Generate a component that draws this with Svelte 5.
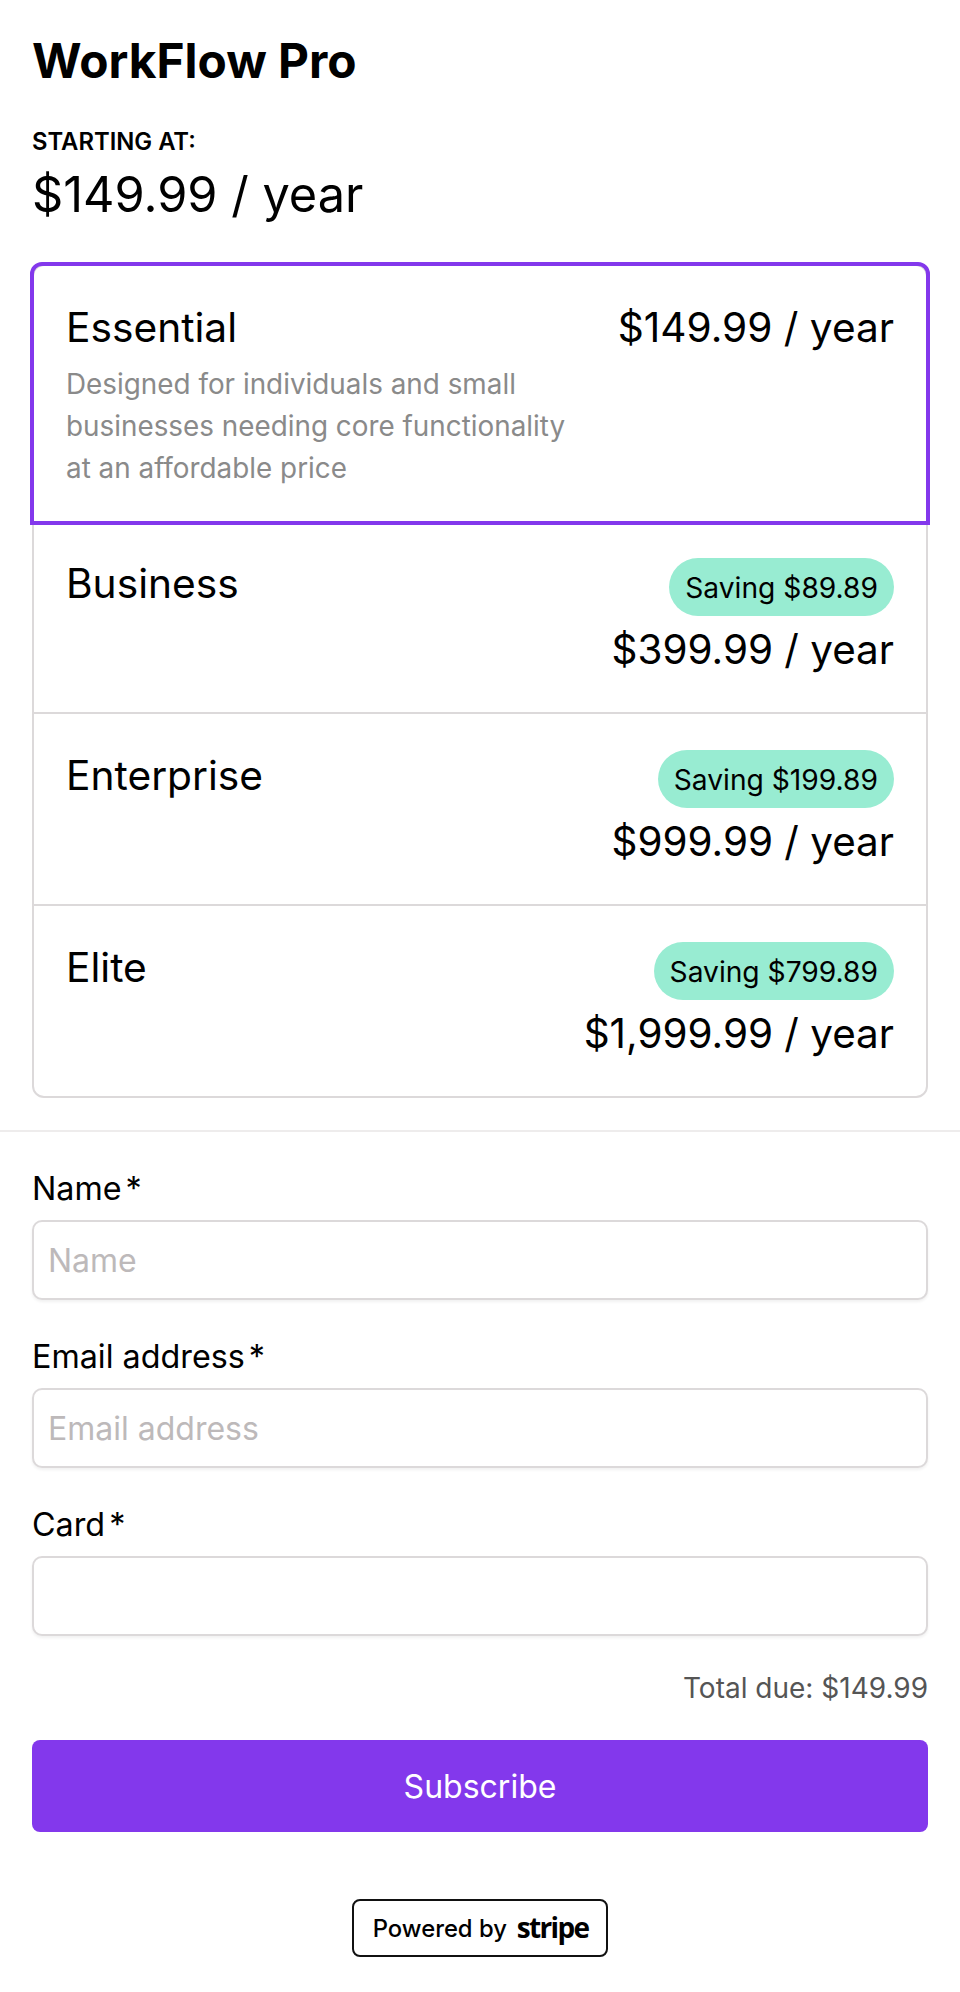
<script>
  const plans = [
    { name: 'Business', saving: 'Saving $89.89', price: '$399.99 / year' },
    { name: 'Enterprise', saving: 'Saving $199.89', price: '$999.99 / year' },
    { name: 'Elite', saving: 'Saving $799.89', price: '$1,999.99 / year' }
  ];
  const fields = [
    { label: 'Name', placeholder: 'Name' },
    { label: 'Email address', placeholder: 'Email address' },
    { label: 'Card', placeholder: '' }
  ];
</script>

<main class="page">
  <header class="head">
    <h1>WorkFlow Pro</h1>
    <p class="starting">STARTING AT:</p>
    <p class="headprice">$149.99 / year</p>
  </header>

  <section class="plans">
    <div class="plan selected">
      <div class="info">
        <div class="name">Essential</div>
        <p class="desc">Designed for individuals and small businesses needing core functionality at an affordable price</p>
      </div>
      <div class="price">$149.99 / year</div>
    </div>
    {#each plans as plan}
      <div class="plan">
        <div class="name">{plan.name}</div>
        <div class="right">
          <span class="chip">{plan.saving}</span>
          <div class="price">{plan.price}</div>
        </div>
      </div>
    {/each}
  </section>

  <hr class="divider" />

  <form class="form">
    {#each fields as f}
      <div class="field">
        <div class="label">{f.label}<span class="req">*</span></div>
        <input type="text" placeholder={f.placeholder} />
      </div>
    {/each}
    <div class="total">Total due: $149.99</div>
    <button type="button" class="subscribe">Subscribe</button>
    <div class="foot">
      <div class="badge"><span class="pow">Powered by</span><span class="stripe">stripe</span></div>
    </div>
  </form>
</main>

<style>
  :global(body) { margin: 0; background: #fff; }
  * { box-sizing: border-box; }
  .page { width: 960px; height: 1992px; font-family: Inter, sans-serif; color: #000; overflow: hidden; }
  .head { padding: 33px 32px 0; }
  h1 { margin: 0; font-size: 47.8px; line-height: 56px; font-weight: 700; }
  .starting { margin: 39px 0 0; font-size: 23.8px; line-height: 28px; font-weight: 600; }
  .headprice { margin: 11px 0 0; font-size: 48.7px; line-height: 56px; }
  .plans { margin: 41px 32px 0; border: 2px solid #dcd9da; border-radius: 12px; }
  .plan { display: flex; justify-content: space-between; align-items: flex-start; padding: 36px 32px 0; height: 192px; border-top: 2px solid #dcd9da; }
  .plan.selected { height: 263px; margin: -4px -4px 0; border: 4px solid #8338ec; border-radius: 12px 12px 0 0; padding: 37px 32px 0; }
  .plan.selected + .plan { height: 187px; border-top: 0; padding-top: 33px; }
  .name { font-size: 40.7px; line-height: 51px; }
  .selected .name { line-height: 50px; }
  .info { width: 520px; }
  .desc { margin: 10px 0 0; font-size: 27.85px; line-height: 42px; color: #8a8a8a; }
  .selected .price { line-height: 50px; font-size: 40.6px; }
  .right { display: flex; flex-direction: column; align-items: flex-end; gap: 10px; }
  .price { font-size: 40.4px; line-height: 48px; }
  .chip { display: block; padding: 9px 16px 7px; font-size: 28.2px; line-height: 42px; background: #98ecd2; border-radius: 29px; }
  .divider { margin: 32px 0 0; border: 0; border-top: 2px solid #eeecec; }
  .form { padding: 36px 32px 0; }
  .field { margin-bottom: 36px; }
  .label { font-size: 32.3px; line-height: 42px; margin-bottom: 10px; }
  .req { margin-left: 4px; }
  input { display: block; width: 100%; height: 80px; padding: 0 14px; font: inherit; font-size: 32px; border: 2px solid #dcd9da; border-radius: 10px; box-shadow: 0 2px 3px rgba(0,0,0,0.06); background: #fff; outline: 0; }
  input::placeholder { color: #bdb9ba; }
  .total { text-align: right; font-size: 28px; line-height: 32px; color: #555; }
  .subscribe { display: block; width: 100%; height: 92px; margin-top: 36px; background: #8338ec; color: #fff; border: 0; border-radius: 8px; font: inherit; font-size: 32px; }
  .foot { display: flex; justify-content: center; margin-top: 67px; }
  .badge { display: flex; align-items: center; gap: 10px; height: 58px; padding: 0 18px 0 19px; border: 2px solid #111; border-radius: 8px; }
  .pow { font-size: 23.8px; font-weight: 500; }
  .stripe { font-family: "Open Sans", sans-serif; font-size: 28px; font-weight: 700; letter-spacing: -1.7px; position: relative; top: -1px; }
</style>
